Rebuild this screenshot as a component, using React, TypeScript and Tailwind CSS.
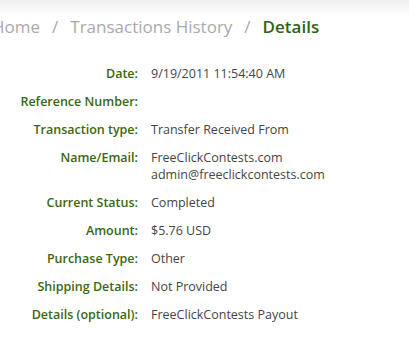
import React from 'react';

const rows: { label: string; value: string[] }[] = [
  { label: 'Date:', value: ['9/19/2011 11:54:40 AM'] },
  { label: 'Reference Number:', value: [''] },
  { label: 'Transaction type:', value: ['Transfer Received From'] },
  { label: 'Name/Email:', value: ['FreeClickContests.com', 'admin@freeclickcontests.com'] },
  { label: 'Current Status:', value: ['Completed'] },
  { label: 'Amount:', value: ['$5.76 USD'] },
  { label: 'Purchase Type:', value: ['Other'] },
  { label: 'Shipping Details:', value: ['Not Provided'] },
  { label: 'Details (optional):', value: ['FreeClickContests Payout'] },
];

export default function App() {
  return (
    <div className="w-[409px] h-[349px] overflow-hidden bg-white font-['Open_Sans',sans-serif]">
      {/* Breadcrumb */}
      <div className="h-[52px] bg-gradient-to-b from-[#efefef] to-white to-[30%] pt-[15px]">
        <div className="flex items-center gap-[12px] ml-[-8px] text-[17px] leading-[24px] text-[#a9a9a9]">
          <span>Home</span>
          <span>/</span>
          <span>Transactions History</span>
          <span>/</span>
          <span className="text-[#2f6410] font-semibold">Details</span>
        </div>
      </div>

      {/* Details */}
      <div className="grid grid-cols-[138px_1fr] gap-x-[13px] gap-y-[11px] pt-[13px] text-[12.5px] leading-[17px]">
        {rows.map((r) => (
          <React.Fragment key={r.label}>
            <div className="text-right text-[#3b6812] font-semibold whitespace-nowrap">{r.label}</div>
            <div className="text-[#454545] min-h-[17px]">
              {r.value.map((v, i) => (
                <div key={i}>{v}</div>
              ))}
            </div>
          </React.Fragment>
        ))}
      </div>
    </div>
  );
}
